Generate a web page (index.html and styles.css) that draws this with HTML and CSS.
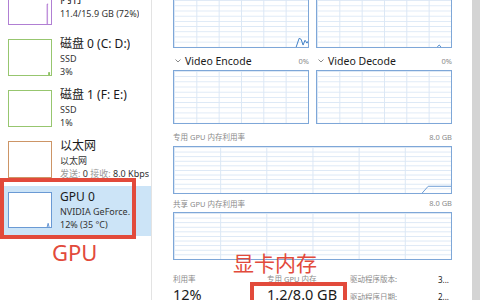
FILE: index.html
```html
<!DOCTYPE html>
<html lang="zh-CN">
<head>
    <meta charset="UTF-8">
    <title>任务管理器 - GPU</title>
    <link rel="stylesheet" href="styles.css">
</head>
<body>
    <div class="window">
        <aside class="sidebar">
            <div class="perf-list">
                <div class="perf-item">
                    <div class="thumb thumb-memory">
                        <svg viewBox="0 0 44 37" preserveAspectRatio="none"><path d="M40 37 L40 16 L41 16 L41 37 Z" fill="#e9d8f3"/><path d="M40 37 L40 16 L41 16" fill="none" stroke="#a868cc" stroke-width="1"/></svg>
                    </div>
                    <div class="info">
                        <div class="title">内存</div>
                        <div class="sub">11.4/15.9 GB (72%)</div>
                    </div>
                </div>
                <div class="perf-item">
                    <div class="thumb thumb-disk">
                        <svg viewBox="0 0 44 37" preserveAspectRatio="none"><path d="M41 37 L41 34 L43 34 L43 37 Z" fill="#8dc063"/></svg>
                    </div>
                    <div class="info">
                        <div class="title">磁盘 0 (C: D:)</div>
                        <div class="sub">SSD</div>
                        <div class="sub">3%</div>
                    </div>
                </div>
                <div class="perf-item">
                    <div class="thumb thumb-disk"></div>
                    <div class="info">
                        <div class="title">磁盘 1 (F: E:)</div>
                        <div class="sub">SSD</div>
                        <div class="sub">1%</div>
                    </div>
                </div>
                <div class="perf-item">
                    <div class="thumb thumb-net"></div>
                    <div class="info">
                        <div class="title">以太网</div>
                        <div class="sub">以太网</div>
                        <div class="sub"><span class="muted">发送:</span> 0 <span class="muted">接收:</span> 8.0 Kbps</div>
                    </div>
                </div>
                <div class="perf-item selected">
                    <div class="thumb thumb-gpu">
                        <svg viewBox="0 0 44 37" preserveAspectRatio="none"><path d="M40 37 L41 33 L42 37" fill="none" stroke="#5b8fd0" stroke-width="1"/></svg>
                    </div>
                    <div class="info">
                        <div class="title">GPU 0</div>
                        <div class="sub">NVIDIA GeForce.</div>
                        <div class="sub">12% (35 °C)</div>
                    </div>
                </div>
            </div>
        </aside>

        <main class="detail">
            <div class="detail-scroll">
                <div class="engines">
                    <div class="engine">
                        <div class="engine-head">
                            <svg class="chevron" viewBox="0 0 6 4"><polyline points="0.5,0.5 3,3 5.5,0.5"/></svg>
                            <span class="engine-name">3D</span>
                            <span class="engine-value">12%</span>
                        </div>
                        <div class="chart chart-small">
                            <svg viewBox="0 0 136 54" preserveAspectRatio="none"><polyline points="124,54 127,45 129,46 131,52 133,47 135,50 136,48" fill="none" stroke="#3f7fc6" stroke-width="1"/></svg>
                        </div>
                    </div>
                    <div class="engine">
                        <div class="engine-head">
                            <svg class="chevron" viewBox="0 0 6 4"><polyline points="0.5,0.5 3,3 5.5,0.5"/></svg>
                            <span class="engine-name">Copy</span>
                            <span class="engine-value">0%</span>
                        </div>
                        <div class="chart chart-small">
                            <svg viewBox="0 0 136 54" preserveAspectRatio="none"><polyline points="122,54 124,52 126,54" fill="none" stroke="#3f7fc6" stroke-width="1"/></svg>
                        </div>
                    </div>
                    <div class="engine">
                        <div class="engine-head">
                            <svg class="chevron" viewBox="0 0 6 4"><polyline points="0.5,0.5 3,3 5.5,0.5"/></svg>
                            <span class="engine-name">Video Encode</span>
                            <span class="engine-value">0%</span>
                        </div>
                        <div class="chart chart-small"></div>
                    </div>
                    <div class="engine">
                        <div class="engine-head">
                            <svg class="chevron" viewBox="0 0 6 4"><polyline points="0.5,0.5 3,3 5.5,0.5"/></svg>
                            <span class="engine-name">Video Decode</span>
                            <span class="engine-value">0%</span>
                        </div>
                        <div class="chart chart-small"></div>
                    </div>
                </div>

                <div class="mem-head first">
                    <span>专用 GPU 内存利用率</span>
                    <span>8.0 GB</span>
                </div>
                <div class="chart chart-wide">
                    <svg viewBox="0 0 279 48" preserveAspectRatio="none"><polyline points="250,48 256,41 279,41" fill="none" stroke="#6a9ad4" stroke-width="1"/></svg>
                </div>

                <div class="mem-head">
                    <span>共享 GPU 内存利用率</span>
                    <span>8.0 GB</span>
                </div>
                <div class="chart chart-wide"></div>

                <div class="stats">
                    <div class="stat stat-util">
                        <div class="stat-label">利用率</div>
                        <div class="stat-value">12%</div>
                    </div>
                    <div class="stat stat-mem">
                        <div class="stat-label">专用 GPU 内存</div>
                        <div class="stat-value">1.2/8.0 GB</div>
                    </div>
                    <div class="driver">
                        <span class="stat-label">驱动程序版本:</span>
                        <span class="driver-value">3...</span>
                        <span class="stat-label">驱动程序日期:</span>
                        <span class="driver-value">2...</span>
                    </div>
                </div>
            </div>
        </main>

        <div class="scrollbar"></div>

        <!-- 标注 -->
        <div class="mark mark-gpu"></div>
        <div class="mark-text mark-gpu-text">GPU</div>
        <div class="mark mark-vram"></div>
        <div class="mark-text mark-vram-text">显卡内存</div>
    </div>
</body>
</html>
```

FILE: styles.css
```css
html, body {
    margin: 0;
    padding: 0;
    background-color: #fff;
}
body {
    font-family: "Noto Sans", "Noto Sans CJK SC", sans-serif;
    color: #1a1a1a;
}
.window {
    position: relative;
    display: flex;
    width: 480px;
    height: 300px;
    overflow: hidden;
}

/* 左侧列表 */
.sidebar {
    width: 151px;
    flex: none;
    border-right: 1px solid #e3e3e3;
    overflow: hidden;
}
.perf-list {
    margin-top: -18px;
}
.perf-item {
    display: flex;
    height: 51px;
    box-sizing: border-box;
    padding-top: 6px;
}
.perf-item.selected {
    background-color: #cce4f7;
    height: 50px;
}
.thumb {
    width: 44px;
    height: 37px;
    box-sizing: border-box;
    margin-left: 8px;
    margin-right: 8px;
    flex: none;
    background-color: #fff;
    border: 1px solid #999;
}
.thumb svg {
    display: block;
    width: 100%;
    height: 100%;
}
.thumb-memory { border-color: #b07fd3; }
.thumb-disk { border-color: #97c66f; }
.thumb-net { border-color: #cd9566; }
.thumb-gpu { border-color: #6a9ad4; height: 36px; }
.info {
    display: flex;
    flex-direction: column;
    justify-content: center;
    height: 43px;
    margin-top: -4px;
    white-space: nowrap;
    overflow: hidden;
}
.title {
    font-size: 12px;
    line-height: 18px;
    color: #1a1a1a;
}
.sub {
    font-size: 9px;
    line-height: 12.5px;
    color: #333;
}
.muted {
    color: #9a9a9a;
}

/* 右侧详情 */
.detail {
    flex: 1;
    overflow: hidden;
}
.detail-scroll {
    margin-top: -28px;
    padding: 0 20px 0 21px;
}
.engines {
    display: grid;
    grid-template-columns: 1fr 1fr;
    column-gap: 7px;
}
.engine-head {
    display: flex;
    align-items: center;
    height: 22px;
    box-sizing: border-box;
    padding-top: 4px;
}
.chevron {
    width: 6px;
    height: 4px;
    margin: 0 4px 0 2px;
    fill: none;
    stroke: #8a8a8a;
    stroke-width: 1;
}
.engine-name {
    font-size: 10.5px;
    color: #1a1a1a;
    flex: 1;
}
.engine-value {
    font-size: 7.5px;
    color: #8a8a8a;
}
.chart {
    box-sizing: border-box;
    border: 1px solid #7ea7d8;
    background-color: #fff;
    background-image:
        linear-gradient(to right, #dbe7f5 1px, transparent 1px),
        linear-gradient(to bottom, #dbe7f5 1px, transparent 1px);
    background-size: calc(100% / 6) 100%, 100% 10%;
}
.chart svg {
    display: block;
    width: 100%;
    height: 100%;
}
.chart-small {
    height: 54px;
}
.chart-wide {
    height: 48px;
}
.mem-head {
    display: flex;
    justify-content: space-between;
    align-items: center;
    height: 18px;
    font-size: 7.5px;
    color: #8a8a8a;
}
.mem-head.first {
    height: 22px;
    padding-top: 3px;
    box-sizing: border-box;
}
.stats {
    display: flex;
    margin-top: 13px;
}
.stat-label {
    font-size: 7.5px;
    line-height: 12px;
    color: #8a8a8a;
}
.stat-value {
    font-size: 14.5px;
    line-height: 18px;
    color: #1a1a1a;
}
.stat-util {
    width: 94px;
}
.stat-mem {
    width: 83px;
}
.driver {
    display: grid;
    grid-template-columns: 88px auto;
    row-gap: 5px;
    align-items: center;
}
.driver-value {
    font-size: 8px;
    color: #1a1a1a;
}

.scrollbar {
    width: 8px;
    flex: none;
    background-color: #d4d4d4;
}

/* 红色标注 */
.mark {
    position: absolute;
    border: 4px solid #e24a3b;
    box-sizing: border-box;
}
.mark-gpu {
    left: 0;
    top: 178px;
    width: 136px;
    height: 61px;
}
.mark-vram {
    left: 250px;
    top: 282px;
    width: 97px;
    height: 30px;
}
.mark-text {
    position: absolute;
    color: #e24a3b;
    line-height: 1;
}
.mark-gpu-text {
    left: 52px;
    top: 241px;
    font-size: 22px;
}
.mark-vram-text {
    left: 233px;
    top: 252px;
    font-size: 21px;
    font-family: "Noto Sans CJK SC", sans-serif;
}
```
